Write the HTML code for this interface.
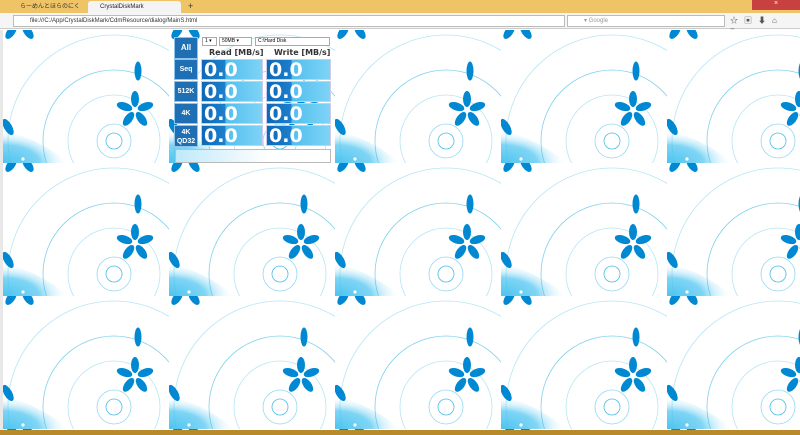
<!DOCTYPE html>
<html><head><meta charset="utf-8"><style>
*{margin:0;padding:0;box-sizing:border-box}
body{width:800px;height:435px;overflow:hidden;font-family:"Liberation Sans","Noto Sans CJK JP",sans-serif;background:#fff;position:relative}
.tabs{position:absolute;left:0;top:0;width:800px;height:13px;background:#efc466}
.tab{position:absolute;top:1px;height:12px;font-size:6px;line-height:12px;padding-left:12px}
.addr{position:absolute;left:0;top:13px;width:800px;height:16px;background:#f5f5f5;border-bottom:1px solid #ccc}
.url{position:absolute;left:13px;top:2px;width:552px;height:12px;background:#fff;border:1px solid #bbb;font-size:6px;line-height:10px;padding-left:16px;color:#333}
.srch{position:absolute;left:567px;top:2px;width:158px;height:12px;background:#fff;border:1px solid #bbb;font-size:6px;line-height:10px;padding-left:16px;color:#999}
.bg{position:absolute;left:0;top:30px;width:800px;height:400px}
.task{position:absolute;left:0;top:430px;width:800px;height:5px;background:#b98a2a}
.cdm{position:absolute;left:173px;top:35px;width:158px;height:129px}
.btn{position:absolute;left:1px;width:24px;background:#1e6fb4;color:#fff;font-weight:bold;font-size:7px;text-align:center;border:1px solid #8fc3ea}
.cell{position:absolute;height:21px;background:linear-gradient(90deg,#0d68b8 0,#1c7fcc 38%,#52bfee 40%,#7fd3f5 100%);color:#fff;font-weight:bold;font-size:19px;line-height:21px;padding-left:2px;font-family:"DejaVu Sans",sans-serif;border:1px solid #cce}
.sel{position:absolute;top:2px;height:9px;background:#fff;border:1px solid #aaa;font-size:5px;line-height:7px;padding-left:2px}
.hd{position:absolute;top:13px;font-size:8px;font-weight:bold;color:#333;font-family:"DejaVu Sans",sans-serif}
</style></head><body>
<div class="tabs">
<div class="tab" style="left:8px;width:80px;background:#efc466;color:#333">らーめんとほらのにく</div>
<div class="tab" style="left:88px;width:93px;background:#f4f4f4;color:#222;border-radius:3px 3px 0 0">CrystalDiskMark</div>
<div style="position:absolute;left:188px;top:1px;font-size:9px;color:#333">+</div>
<div style="position:absolute;left:752px;top:0;width:48px;height:10px;background:#c94040;font-size:7px;color:#fff;text-align:center">×</div>
</div>
<div class="addr"><div class="url">file:///C:/App/CrystalDiskMark/CdmResource/dialog/MainS.html</div>
<div class="srch">▾ Google</div>
<div style="position:absolute;left:730px;top:2px;font-size:8px;color:#555;letter-spacing:6px">☆▣⬇⌂ ≡</div></div>
<svg class="bg" width="800" height="400" viewBox="0 0 800 400">
<defs>
<radialGradient id="g" cx="0" cy="1" r="1"><stop offset="0" stop-color="#4cc4f0"/><stop offset="0.55" stop-color="#7fd5f5"/><stop offset="1" stop-color="#fff" stop-opacity="0"/></radialGradient>
<pattern id="t" width="166" height="133" patternUnits="userSpaceOnUse" x="3" y="0">
<rect width="166" height="133" fill="#fff"/>
<path d="M0 100 Q35 108 66 133 L0 133Z" fill="url(#g)"/>
<g fill="none" stroke="#48bde6" stroke-width="0.8">
<circle cx="111" cy="111" r="8"/><circle cx="111" cy="111" r="17" stroke-opacity=".6"/>
<circle cx="111" cy="111" r="46" stroke-opacity=".4"/><circle cx="111" cy="111" r="71" stroke-opacity=".7"/>
<circle cx="111" cy="111" r="106" stroke-opacity=".4"/></g>
<g fill="#0088d2" transform="translate(132,80)">
<ellipse cx="0" cy="-11" rx="4" ry="8"/><ellipse cx="0" cy="-11" rx="4" ry="8" transform="rotate(72)"/><ellipse cx="0" cy="-11" rx="4" ry="8" transform="rotate(144)"/><ellipse cx="0" cy="-11" rx="4" ry="8" transform="rotate(216)"/><ellipse cx="0" cy="-11" rx="4" ry="8" transform="rotate(288)"/></g>
<ellipse cx="135" cy="41" rx="3.5" ry="9.5" fill="#0088d2"/>
<ellipse cx="8" cy="2" rx="4" ry="8" fill="#0088d2" transform="rotate(35 8 2)"/>
<ellipse cx="25" cy="2" rx="4" ry="8" fill="#0088d2" transform="rotate(-35 25 2)"/>
<ellipse cx="5" cy="97" rx="4" ry="9" fill="#0088d2" transform="rotate(-30 5 97)"/>
<circle cx="20" cy="129" r="1.6" fill="#fff"/>
</pattern></defs>
<rect width="800" height="400" fill="url(#t)"/>
<rect width="3" height="400" fill="#e8e8e8"/>
</svg>
<div class="cdm">
<div class="btn" style="top:2px;height:22px;line-height:20px;font-size:8px">All</div>
<div class="sel" style="left:29px;width:15px">1 ▾</div>
<div class="sel" style="left:46px;width:33px">50MB ▾</div>
<div class="sel" style="left:82px;width:75px">C:\Hard Disk</div>
<div class="hd" style="left:36px">Read [MB/s]</div>
<div class="hd" style="left:101px">Write [MB/s]</div>
<div class="btn" style="top:24px;height:21px;line-height:19px">Seq</div>
<div class="btn" style="top:46px;height:21px;line-height:19px">512K</div>
<div class="btn" style="top:68px;height:21px;line-height:19px">4K</div>
<div class="btn" style="top:90px;height:22px;line-height:9px;padding-top:2px">4K<br>QD32</div>
<div class="cell" style="left:28px;top:24px;width:62px">0.0</div><div class="cell" style="left:93px;top:24px;width:65px">0.0</div>
<div class="cell" style="left:28px;top:46px;width:62px">0.0</div><div class="cell" style="left:93px;top:46px;width:65px">0.0</div>
<div class="cell" style="left:28px;top:68px;width:62px">0.0</div><div class="cell" style="left:93px;top:68px;width:65px">0.0</div>
<div class="cell" style="left:28px;top:90px;width:62px">0.0</div><div class="cell" style="left:93px;top:90px;width:65px">0.0</div>
<div style="position:absolute;left:2px;top:114px;width:156px;height:14px;border:1px solid #bbb;background:linear-gradient(90deg,#bfe9fa,#fff 60%)"></div>
</div>
<div class="task"></div>
</body></html>
